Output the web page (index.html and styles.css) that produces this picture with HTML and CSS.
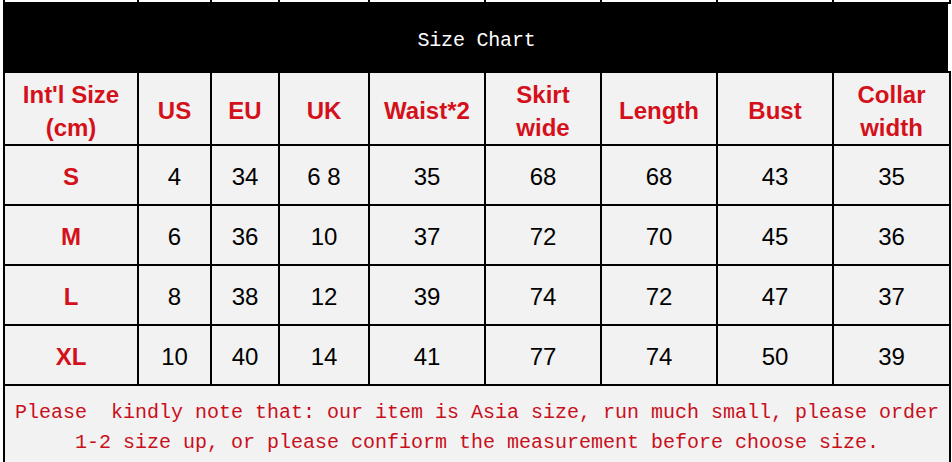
FILE: index.html
```html
<!DOCTYPE html>
<html>
<head>
<meta charset="utf-8">
<title>Size Chart</title>
<link rel="stylesheet" href="styles.css">
</head>
<body>
<div class="chart">
  <div class="strip"></div><div class="strip"></div><div class="strip"></div><div class="strip"></div><div class="strip"></div><div class="strip"></div><div class="strip"></div><div class="strip"></div><div class="strip"></div>
  <div class="title"><span>Size Chart</span></div>

  <div class="cell head">Int'l Size<br>(cm)</div>
  <div class="cell head">US</div>
  <div class="cell head">EU</div>
  <div class="cell head">UK</div>
  <div class="cell head">Waist*2</div>
  <div class="cell head">Skirt<br>wide</div>
  <div class="cell head">Length</div>
  <div class="cell head">Bust</div>
  <div class="cell head">Collar<br>width</div>

  <div class="cell size">S</div>
  <div class="cell">4</div><div class="cell">34</div><div class="cell">6 8</div><div class="cell">35</div><div class="cell">68</div><div class="cell">68</div><div class="cell">43</div><div class="cell">35</div>

  <div class="cell size">M</div>
  <div class="cell">6</div><div class="cell">36</div><div class="cell">10</div><div class="cell">37</div><div class="cell">72</div><div class="cell">70</div><div class="cell">45</div><div class="cell">36</div>

  <div class="cell size">L</div>
  <div class="cell">8</div><div class="cell">38</div><div class="cell">12</div><div class="cell">39</div><div class="cell">74</div><div class="cell">72</div><div class="cell">47</div><div class="cell">37</div>

  <div class="cell size">XL</div>
  <div class="cell">10</div><div class="cell">40</div><div class="cell">14</div><div class="cell">41</div><div class="cell">77</div><div class="cell">74</div><div class="cell">50</div><div class="cell">39</div>

  <div class="note">Please&nbsp; kindly note that: our item is Asia size, run much small, please order<br>1-2 size up, or please confiorm the measurement before choose size.</div>
</div>
</body>
</html>
```

FILE: styles.css
```css
html, body {
  margin: 0;
  padding: 0;
  background: #ffffff;
  overflow: hidden;
}

.chart {
  margin-left: 3px;
  width: 948px;
  box-sizing: border-box;
  padding: 0 2px 2px 2px;
  background: #000000;
  display: grid;
  grid-template-columns: 132px 71px 66px 88px 114px 114px 114px 114px 115px;
  grid-template-rows: 2px 67px 71px 58px 58px 58px 58px 90px;
  gap: 2px;
  font-family: "Liberation Sans", Arial, sans-serif;
}

.strip {
  background: #ffffff;
}

.title {
  grid-column: 1 / -1;
  background: #000000;
  border-right: 3px solid #ffffff;
  margin-right: -2px;
  display: flex;
  align-items: center;
  justify-content: center;
  padding-top: 6px;
  box-sizing: border-box;
}

.title span {
  font-family: "Liberation Mono", "Courier New", monospace;
  font-size: 20px;
  color: #ffffff;
  letter-spacing: -0.2px;
}

.cell {
  background: #f2f2f2;
  display: flex;
  align-items: center;
  justify-content: center;
  text-align: center;
  font-size: 24px;
  color: #000000;
  padding-top: 3px;
  box-sizing: border-box;
}

.head {
  color: #d4111b;
  font-weight: bold;
  line-height: 33px;
  padding-top: 4px;
}

.size {
  color: #d4111b;
  font-weight: bold;
}

.note {
  grid-column: 1 / -1;
  background: #f2f2f2;
  font-family: "Liberation Mono", "Courier New", monospace;
  font-size: 20px;
  line-height: 30px;
  color: #c8101c;
  text-align: center;
  padding-top: 12px;
  box-sizing: border-box;
}
```
